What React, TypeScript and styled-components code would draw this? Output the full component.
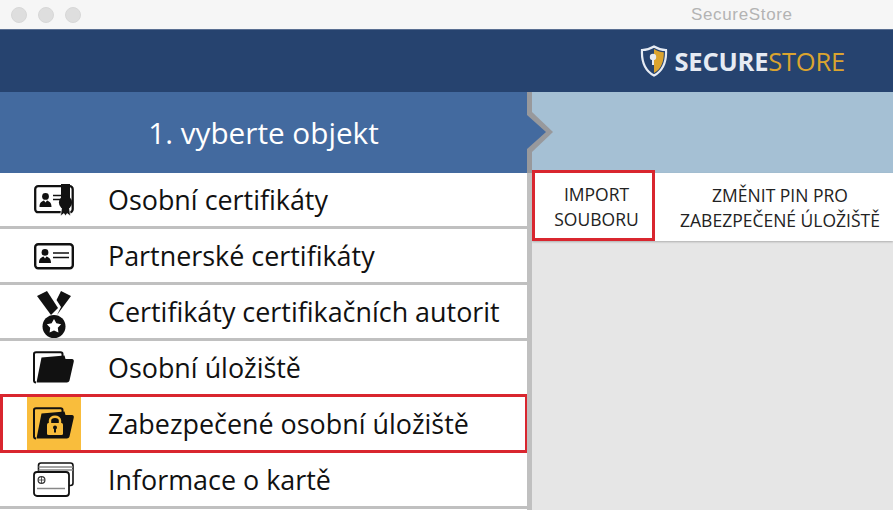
import React from "react";
import styled, { createGlobalStyle } from "styled-components";

const GlobalStyle = createGlobalStyle`
  html, body {
    margin: 0;
    padding: 0;
    background: #e6e6e6;
  }
`;

const Window = styled.div`
  width: 893px;
  height: 510px;
  overflow: hidden;
  display: flex;
  flex-direction: column;
  font-family: "Open Sans", sans-serif;
  background: #e6e6e6;
`;

const TitleBar = styled.div`
  height: 29px;
  flex: none;
  display: flex;
  align-items: center;
  gap: 11px;
  padding-left: 11px;
  box-sizing: border-box;
  background: #f6f6f6;
  position: relative;
`;

const Light = styled.span`
  width: 16px;
  height: 16px;
  border-radius: 50%;
  background: #dedede;
  border: 1px solid #d8d8d8;
  box-sizing: border-box;
`;

const WindowTitle = styled.span`
  position: absolute;
  left: 691px;
  top: 5px;
  font-family: "Liberation Sans", sans-serif;
  font-size: 17px;
  line-height: 20px;
  letter-spacing: 0.65px;
  color: #b3b3b3;
`;

const Header = styled.header`
  height: 63px;
  flex: none;
  display: flex;
  align-items: center;
  justify-content: flex-end;
  gap: 6px;
  padding-right: 48px;
  background: #26436f;
  border-top: 1px solid #5a6f92;
  box-sizing: border-box;
`;

const Logo = styled.div`
  display: flex;
  font-size: 25.5px;
  line-height: 30px;
  letter-spacing: -0.2px;
`;

const LogoBold = styled.span`
  font-weight: 700;
  color: #e6ebf3;
`;

const LogoLight = styled.span`
  font-weight: 400;
  color: #dba42f;
`;

const Body = styled.div`
  flex: 1;
  display: grid;
  grid-template-columns: 527px 5px 1fr;
  min-height: 0;
`;

const LeftPane = styled.section`
  display: flex;
  flex-direction: column;
  background: #fff;
`;

const StepHeader = styled.div`
  height: 81px;
  flex: none;
  display: flex;
  align-items: center;
  justify-content: center;
  box-sizing: border-box;
  background: #436a9f;
  color: #fff;
  font-size: 29.7px;
`;

const List = styled.div`
  display: flex;
  flex-direction: column;
`;

const Row = styled.div<{ $selected?: boolean }>`
  height: 56px;
  flex: none;
  display: flex;
  align-items: center;
  box-sizing: border-box;
  padding-left: 27px;
  background: #fff;
  border-bottom: 3px solid #c0c0c0;
  position: relative;
  color: #111;

  ${(p) =>
    p.$selected &&
    `
    &::after {
      content: "";
      position: absolute;
      left: 0;
      right: -1px;
      top: -3px;
      bottom: -3px;
      border: 3px solid #d9262f;
      pointer-events: none;
    }
  `}
`;

const IconCell = styled.div<{ $selected?: boolean }>`
  width: 54px;
  height: 53px;
  flex: none;
  display: flex;
  align-items: center;
  justify-content: center;
  background: ${(p) => (p.$selected ? "#f9bd3c" : "transparent")};
`;

const RowLabel = styled.span`
  margin: 0 0 0 27px;
  font-size: 26.9px;
  line-height: 32px;
  white-space: nowrap;
`;

const Divider = styled.div`
  background: linear-gradient(#98999c 81px, #c0c0c0 81px);
  position: relative;
`;

const Chevron = styled.svg`
  position: absolute;
  left: 0;
  top: 20px;
  z-index: 2;
`;

const RightPane = styled.section`
  display: flex;
  flex-direction: column;
  background: #e6e6e6;
`;

const RightBand = styled.div`
  height: 81px;
  flex: none;
  background: #a5c0d4;
`;

const Toolbar = styled.div`
  height: 68px;
  flex: none;
  display: flex;
  background: #fff;
  box-shadow: 0 1px 2px rgba(0, 0, 0, 0.25);
`;

const ToolButton = styled.button<{ $active?: boolean; $width: number }>`
  width: ${(p) => p.$width}px;
  flex: none;
  margin: 0;
  padding: ${(p) => (p.$active ? "2px 0 0 6px" : "1px 13px 0 25px")};
  background: #fff;
  font-family: inherit;
  font-size: 17.5px;
  line-height: 25px;
  color: #222;
  text-align: center;
  white-space: nowrap;
  box-sizing: border-box;
  border: ${(p) => (p.$active ? "3px solid #d9262f" : "none")};
  position: relative;
  top: ${(p) => (p.$active ? "-3px" : "0")};
  height: ${(p) => (p.$active ? "71px" : "68px")};
`;

const ShieldIcon = () => (
  <svg width="28" height="32" viewBox="0 0 28 32">
    <path
      d="M14 1.5 C10 4 6 5 2 5 C1.5 15 4 25 14 30.5 C24 25 26.5 15 26 5 C22 5 18 4 14 1.5 Z"
      fill="#26436f"
      stroke="#e6ebf3"
      strokeWidth="2.2"
    />
    <path d="M14 4 C17 6 20 7 23.8 7.2 C24 15 22 24 14 28 Z" fill="#dba42f" />
    <circle cx="13" cy="12" r="3.2" fill="#e6ebf3" />
    <rect x="12" y="13" width="2" height="7" fill="#e6ebf3" />
  </svg>
);

const Person = ({ x, y }: { x: number; y: number }) => (
  <g transform={`translate(${x} ${y})`} fill="#111">
    <circle cx="6" cy="3.4" r="3.4" />
    <path d="M0 14 C0 9.5 2.5 8.3 4.5 7.6 L6 9.5 L7.5 7.6 C9.5 8.3 12 9.5 12 14 Z" />
  </g>
);

const CertIcon = () => (
  <svg width="42" height="34" viewBox="0 0 42 34">
    <rect x="2.2" y="3.2" width="37.5" height="26" rx="3" fill="none" stroke="#111" strokeWidth="2.3" />
    <Person x={6.5} y={10} />
    <path d="M20 12.5 H28 M20 16.5 H28" stroke="#111" strokeWidth="1.5" />
    <rect x="28" y="1" width="9" height="16" fill="#111" />
    <path d="M29 22 L27.5 33 L31 30.5 L32.5 33 L34 30.5 L37.5 33 L36 22 Z" fill="#111" stroke="#fff" strokeWidth="0.7" />
    <circle cx="32.5" cy="19.5" r="6.6" fill="#111" />
  </svg>
);

const CardIcon = () => (
  <svg width="42" height="28" viewBox="0 0 42 28">
    <rect x="2.2" y="2.2" width="37.6" height="24" rx="3" fill="none" stroke="#111" strokeWidth="2.4" />
    <Person x={6} y={7} />
    <path d="M20 11 H36 M20 15.5 H36" stroke="#111" strokeWidth="1.5" />
  </svg>
);

const MedalIcon = () => (
  <svg width="36" height="52" viewBox="0 0 36 52">
    <path d="M1 10 L11 5 L22 22 L15 29 Z" fill="#111" />
    <path d="M35 10 L25 5 L20.5 14 L25 21 L21 29 Z" fill="#111" />
    <circle cx="18" cy="40.5" r="11.5" fill="#111" />
    <path
      d="M18 33 L20.35 37.26 L25.13 38.18 L21.8 41.74 L22.41 46.57 L18 44.5 L13.59 46.57 L14.2 41.74 L10.87 38.18 L15.65 37.26 Z"
      fill="#fff"
    />
  </svg>
);

const folderOutline = "M3 31.5 C1.8 31.5 1 30.7 1 29.5 V3 C1 2 1.8 1.2 3 1.2 H27.5 C28.5 1.2 29.5 2 29.5 3 V5";
const folderFront = "M8.5 6.5 L31.5 4.5 L32.5 8 H39 C40.4 8 41 9 40.8 10.5 L36.5 29.5 C36.2 30.8 35 31.5 34 31.5 H3.5 Z";

const FolderIcon = () => (
  <svg width="42" height="33" viewBox="0 0 42 33">
    <path d={folderOutline} fill="none" stroke="#111" strokeWidth="2" />
    <path d={folderFront} fill="#111" />
  </svg>
);

const LockFolderIcon = () => (
  <svg width="42" height="33" viewBox="0 0 42 33">
    <path d={folderOutline} fill="none" stroke="#111" strokeWidth="2" />
    <path d={folderFront} fill="#111" />
    <path d="M17 17 V13.5 C17 8.5 27 8.5 27 13.5 V17" fill="none" stroke="#f9bd3c" strokeWidth="2.4" />
    <rect x="14" y="16" width="16" height="12" rx="1.5" fill="#f9bd3c" />
    <circle cx="22" cy="20.5" r="2" fill="#111" />
    <rect x="21" y="21" width="2" height="4.5" fill="#111" />
  </svg>
);

const CardsIcon = () => (
  <svg width="42" height="35" viewBox="0 0 42 35">
    <path
      d="M5.5 9 V3.5 C5.5 2 6.5 1 8 1 H37.5 C39 1 40 2 40 3.5 V21 C40 22.5 39 23.5 37.5 23.5 H36"
      fill="none"
      stroke="#111"
      strokeWidth="1.6"
    />
    <path d="M5.5 5 H40 M5.5 8 H40" stroke="#888" strokeWidth="1.4" />
    <rect x="1" y="10" width="35" height="24" rx="3" fill="#fff" stroke="#111" strokeWidth="1.8" />
    <circle cx="8.5" cy="18" r="3.4" fill="none" stroke="#333" strokeWidth="1.2" />
    <path d="M5.5 18 H11.5 M8.5 15 V21" stroke="#333" strokeWidth="0.8" />
    <path d="M4 26.5 H32" stroke="#888" strokeWidth="1.5" />
  </svg>
);

const items = [
  { label: "Osobní certifikáty", icon: <CertIcon /> },
  { label: "Partnerské certifikáty", icon: <CardIcon /> },
  { label: "Certifikáty certifikačních autorit", icon: <MedalIcon /> },
  { label: "Osobní úložiště", icon: <FolderIcon /> },
  { label: "Zabezpečené osobní úložiště", icon: <LockFolderIcon />, selected: true },
  { label: "Informace o kartě", icon: <CardsIcon /> },
];

export default function App() {
  return (
    <Window>
      <GlobalStyle />
      <TitleBar>
        <Light />
        <Light />
        <Light />
        <WindowTitle>SecureStore</WindowTitle>
      </TitleBar>
      <Header>
        <ShieldIcon />
        <Logo>
          <LogoBold>SECURE</LogoBold>
          <LogoLight>STORE</LogoLight>
        </Logo>
      </Header>
      <Body>
        <LeftPane>
          <StepHeader>1. vyberte objekt</StepHeader>
          <List>
            {items.map((item) => (
              <Row key={item.label} $selected={item.selected}>
                <IconCell $selected={item.selected}>{item.icon}</IconCell>
                <RowLabel>{item.label}</RowLabel>
              </Row>
            ))}
          </List>
        </LeftPane>
        <Divider>
          <Chevron width="27" height="40" viewBox="0 0 27 40">
            <path d="M0 3 L5 0 L26 20 L5 40 L0 37 Z" fill="#98999c" />
            <path d="M0 3 L19 20 L0 37 Z" fill="#436a9f" />
          </Chevron>
        </Divider>
        <RightPane>
          <RightBand />
          <Toolbar>
            <ToolButton $active $width={123}>
              IMPORT
              <br />
              SOUBORU
            </ToolButton>
            <ToolButton $width={238}>
              ZMĚNIT PIN PRO
              <br />
              ZABEZPEČENÉ ÚLOŽIŠTĚ
            </ToolButton>
          </Toolbar>
        </RightPane>
      </Body>
    </Window>
  );
}
